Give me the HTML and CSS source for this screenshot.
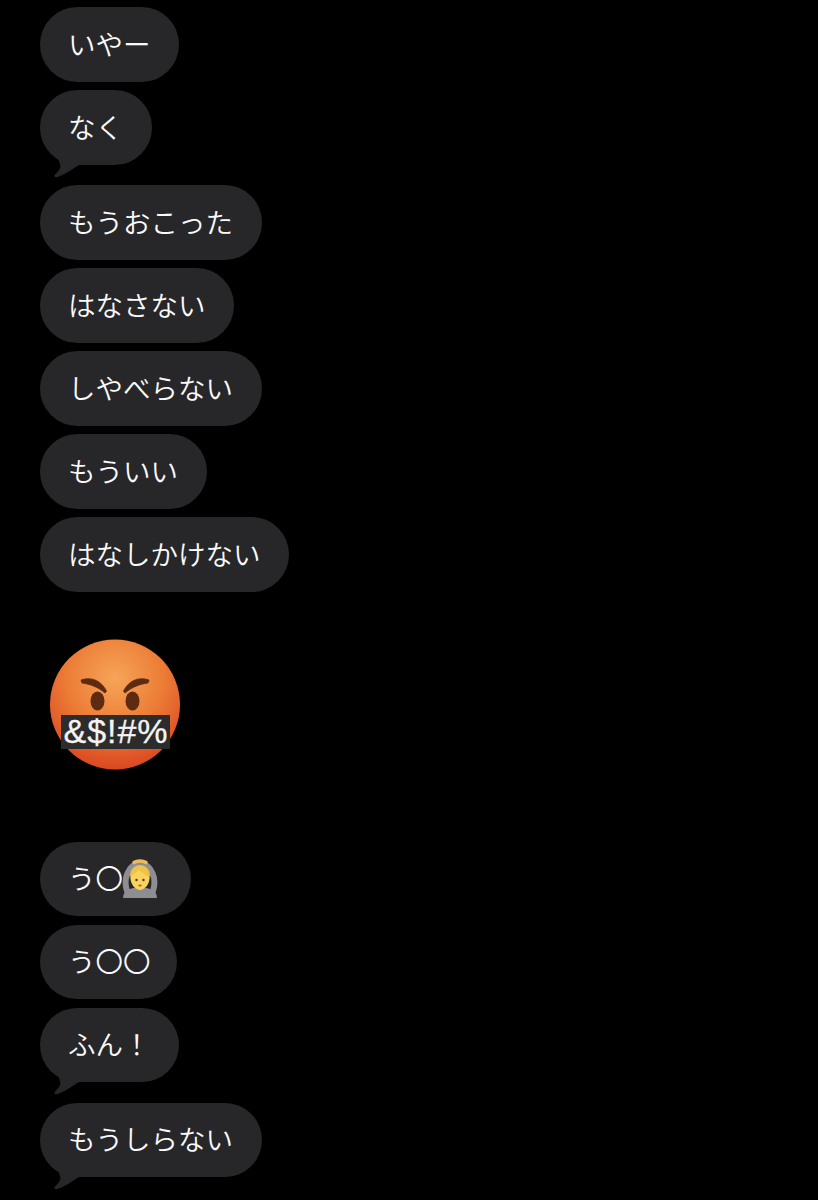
FILE: index.html
```html
<!DOCTYPE html>
<html lang="ja">
<head>
<meta charset="utf-8">
<title>メッセージ</title>
<link rel="stylesheet" href="styles.css">
</head>
<body>
<svg class="defs" width="0" height="0" aria-hidden="true">
  <defs>
    <symbol id="tail" viewBox="0 0 32 20">
      <path d="M7 0 L9.500 8 C9 12 6 14.500 3.800 16.800 C2.800 18.400 4 19.800 6 19.200 C13 17 20 12 28 7 L32 7 L32 0 Z"/>
    </symbol>
  </defs>
</svg>
<main class="thread">
  <div class="bubble"><span class="label">いやー</span></div>
  <div class="bubble has-tail"><span class="label">なく</span><svg class="tail"><use href="#tail"/></svg></div>
  <div class="bubble"><span class="label">もうおこった</span></div>
  <div class="bubble"><span class="label">はなさない</span></div>
  <div class="bubble"><span class="label">しやべらない</span></div>
  <div class="bubble"><span class="label">もういい</span></div>
  <div class="bubble"><span class="label">はなしかけない</span></div>

  <svg class="big-emoji" viewBox="0 0 150 150" role="img" aria-label="怒り">
    <defs>
      <radialGradient id="face" cx="50%" cy="30%" r="75%">
        <stop offset="0" stop-color="#f6a558"/>
        <stop offset="0.5" stop-color="#ec7c36"/>
        <stop offset="1" stop-color="#d8401f"/>
      </radialGradient>
    </defs>
    <circle cx="75" cy="74.500" r="65" fill="url(#face)"/>
    <path class="brow" d="M41 50 C50 47 60 49 66.500 61 L65 63 C58 57 50 54 42 53 Z"/>
    <path class="brow" d="M109 50 C100 47 90 49 83.500 61 L85 63 C92 57 100 54 108 53 Z"/>
    <ellipse class="eye" cx="57.500" cy="71" rx="7" ry="9.500"/>
    <ellipse class="eye" cx="92.500" cy="71" rx="7" ry="9.500"/>
    <rect class="bar" x="21" y="85" width="109" height="34"/>
    <text class="curse" x="75.500" y="113" text-anchor="middle" textLength="104" lengthAdjust="spacing">&amp;$!#%</text>
  </svg>

  <div class="bubble"><span class="label">う〇</span><svg class="small-emoji" viewBox="0 0 38 40" role="img" aria-label="OK">
      <path class="arms" d="M6 32 C2 20 7 6 19 4 C31 6 36 20 32 32"/>
      <path d="M13 3.500 C16 1.500 22 1.500 25 3.500" fill="none" stroke="#e9bd5c" stroke-width="3.500" stroke-linecap="round"/>
      <path d="M2 39 C2 31 10 28.500 19 28.500 C28 28.500 36 31 36 39 Z" fill="#8d8d92"/>
      <circle cx="19" cy="16" r="10" fill="#efc24a"/>
      <path d="M9.500 19 C11 15 15 14 18 11 C20 14 25 15 28.500 19 C28.500 26 23 31 19 31 C15 31 9.500 26 9.500 19 Z" fill="#f8d45f"/>
      <circle cx="15.500" cy="21" r="1.200" fill="#4a3320"/>
      <circle cx="22.500" cy="21" r="1.200" fill="#4a3320"/>
      <ellipse cx="19" cy="26.500" rx="1.800" ry="1" fill="#b9603a"/>
    </svg></div>
  <div class="bubble bubble-tight"><span class="label">う〇〇</span></div>
  <div class="bubble has-tail"><span class="label">ふん！</span><svg class="tail"><use href="#tail"/></svg></div>
  <div class="bubble has-tail"><span class="label">もうしらない</span><svg class="tail"><use href="#tail"/></svg></div>
</main>
</body>
</html>
```
FILE: styles.css
```css
html, body {
  margin: 0;
  background: #000;
}

body {
  height: 1200px;
  overflow: hidden;
}

.defs {
  display: block;
  height: 0;
}

.thread {
  display: flex;
  flex-direction: column;
  align-items: flex-start;
  gap: 8.4px;
  padding: 7.300px 0 0 40px;
  font-family: "Noto Sans CJK JP", "Noto Sans", sans-serif;
  font-kerning: none;
  font-feature-settings: "palt" 0, "kern" 0;
}

.bubble {
  position: relative;
  display: flex;
  align-items: center;
  box-sizing: border-box;
  height: 74.600px;
  padding: 0 28.500px 2px 28px;
  border-radius: 37.300px;
  background: #27272a;
  color: #fafafa;
  font-size: 27.500px;
  font-weight: 350;
  line-height: 1;
  white-space: nowrap;
}

.bubble-tight {
  padding-right: 26px;
}

.has-tail {
  margin-bottom: 12px;
}

.tail {
  position: absolute;
  left: 11px;
  bottom: -13px;
  width: 32px;
  height: 20px;
  fill: #27272a;
}

.big-emoji {
  display: block;
  width: 150px;
  height: 150px;
  margin: 30px 0 53px 0;
}

.brow {
  fill: #5f2a12;
  stroke: #5f2a12;
  stroke-width: 0.800px;
  stroke-linejoin: round;
}

.eye {
  fill: #5e2a12;
}

.bar {
  fill: #2c2c2d;
}

.curse {
  fill: #f4f4f4;
  stroke: #f4f4f4;
  stroke-width: 0.300px;
  font-family: "Liberation Sans", sans-serif;
  font-size: 34px;
}

.arms {
  fill: none;
  stroke: #8d8d92;
  stroke-width: 6px;
  stroke-linecap: round;
}

.small-emoji {
  flex: none;
  width: 38px;
  height: 40px;
  margin: 3px 0 0 -2px;
  padding-right: 3px;
}
```
